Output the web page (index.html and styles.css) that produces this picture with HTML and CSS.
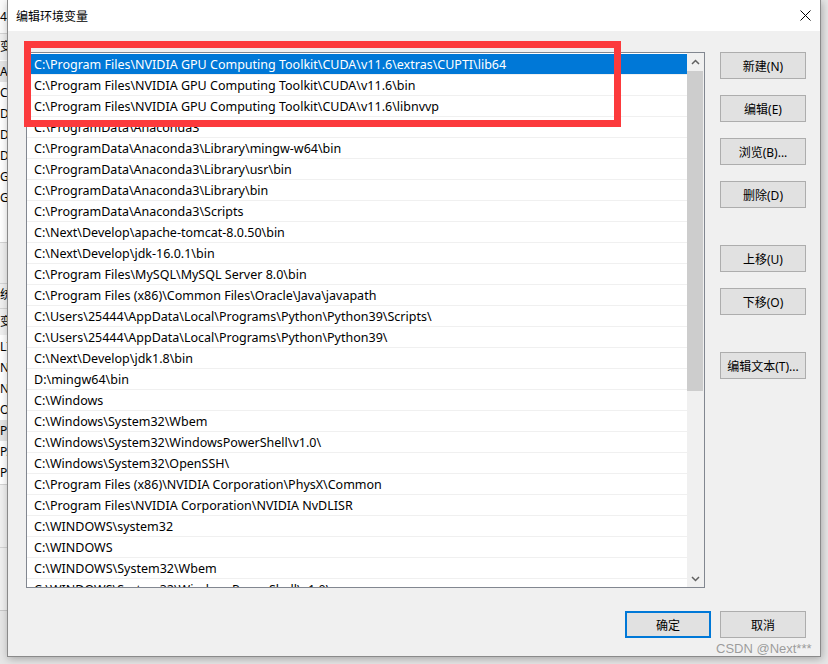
FILE: index.html
```html
<!DOCTYPE html>
<html lang="zh-CN">
<head>
    <meta charset="UTF-8">
    <meta name="viewport" content="width=device-width, initial-scale=1.0">
    <title>编辑环境变量</title>
    <link rel="stylesheet" href="styles.css">
</head>
<body>
    <!-- window behind the dialog, only a sliver is visible -->
    <div class="bg-window">
        <div class="bgw-head">44</div>
        <div class="bgw-label">变量</div>
        <div class="bgw-list">
            <div class="bgw-row hl">AP</div>
            <div class="bgw-row">CL</div>
            <div class="bgw-row">DA</div>
            <div class="bgw-row">DA</div>
            <div class="bgw-row">DE</div>
            <div class="bgw-row">GA</div>
            <div class="bgw-row">GO</div>
        </div>
        <div class="bgw-gap"></div>
        <div class="bgw-label short">统</div>
        <div class="bgw-label">变量</div>
        <div class="bgw-list second">
            <div class="bgw-row">LI</div>
            <div class="bgw-row">NU</div>
            <div class="bgw-row">NV</div>
            <div class="bgw-row">OS</div>
            <div class="bgw-row hl">Pa</div>
            <div class="bgw-row">PA</div>
            <div class="bgw-row">PR</div>
        </div>
        <div class="bgw-gap tall"></div>
    </div>

    <div class="dialog">
        <div class="titlebar">
            <span class="title">编辑环境变量</span>
            <svg class="close" width="11" height="11" viewBox="0 0 11 11">
                <path d="M0.5 0.5L10.5 10.5M10.5 0.5L0.5 10.5" stroke="#000" stroke-width="1" fill="none"/>
            </svg>
        </div>

        <div class="dialog-body">
            <div class="listbox">
                <div class="rows">
                    <div class="row selected">C:\Program Files\NVIDIA GPU Computing Toolkit\CUDA\v11.6\extras\CUPTI\lib64</div>
                    <div class="row">C:\Program Files\NVIDIA GPU Computing Toolkit\CUDA\v11.6\bin</div>
                    <div class="row">C:\Program Files\NVIDIA GPU Computing Toolkit\CUDA\v11.6\libnvvp</div>
                    <div class="row">C:\ProgramData\Anaconda3</div>
                    <div class="row">C:\ProgramData\Anaconda3\Library\mingw-w64\bin</div>
                    <div class="row">C:\ProgramData\Anaconda3\Library\usr\bin</div>
                    <div class="row">C:\ProgramData\Anaconda3\Library\bin</div>
                    <div class="row">C:\ProgramData\Anaconda3\Scripts</div>
                    <div class="row">C:\Next\Develop\apache-tomcat-8.0.50\bin</div>
                    <div class="row">C:\Next\Develop\jdk-16.0.1\bin</div>
                    <div class="row">C:\Program Files\MySQL\MySQL Server 8.0\bin</div>
                    <div class="row">C:\Program Files (x86)\Common Files\Oracle\Java\javapath</div>
                    <div class="row">C:\Users\25444\AppData\Local\Programs\Python\Python39\Scripts\</div>
                    <div class="row">C:\Users\25444\AppData\Local\Programs\Python\Python39\</div>
                    <div class="row">C:\Next\Develop\jdk1.8\bin</div>
                    <div class="row">D:\mingw64\bin</div>
                    <div class="row">C:\Windows</div>
                    <div class="row">C:\Windows\System32\Wbem</div>
                    <div class="row">C:\Windows\System32\WindowsPowerShell\v1.0\</div>
                    <div class="row">C:\Windows\System32\OpenSSH\</div>
                    <div class="row">C:\Program Files (x86)\NVIDIA Corporation\PhysX\Common</div>
                    <div class="row">C:\Program Files\NVIDIA Corporation\NVIDIA NvDLISR</div>
                    <div class="row">C:\WINDOWS\system32</div>
                    <div class="row">C:\WINDOWS</div>
                    <div class="row">C:\WINDOWS\System32\Wbem</div>
                    <div class="row">C:\WINDOWS\System32\WindowsPowerShell\v1.0\</div>
                </div>
                <div class="scrollbar">
                    <div class="sb-arrow">
                        <svg width="9" height="6" viewBox="0 0 9 6"><polyline points="1,5 4.5,1.5 8,5" fill="none" stroke="#606060" stroke-width="1.5"/></svg>
                    </div>
                    <div class="sb-thumb"></div>
                    <div class="sb-track"></div>
                    <div class="sb-arrow">
                        <svg width="9" height="6" viewBox="0 0 9 6"><polyline points="1,1 4.5,4.5 8,1" fill="none" stroke="#606060" stroke-width="1.5"/></svg>
                    </div>
                </div>
            </div>

            <div class="side-buttons">
                <div class="btn-group">
                    <div class="btn">新建(N)</div>
                    <div class="btn">编辑(E)</div>
                    <div class="btn">浏览(B)...</div>
                    <div class="btn">删除(D)</div>
                </div>
                <div class="btn-group">
                    <div class="btn">上移(U)</div>
                    <div class="btn">下移(O)</div>
                </div>
                <div class="btn-group">
                    <div class="btn">编辑文本(T)...</div>
                </div>
            </div>

            <div class="footer">
                <div class="btn default">确定</div>
                <div class="btn">取消</div>
            </div>
        </div>
    </div>

    <!-- red annotation drawn over the screenshot -->
    <div class="mark"></div>
    <div class="watermark">CSDN @Next***</div>
</body>
</html>
```

FILE: styles.css
```css
body {
    margin: 0;
    width: 828px;
    height: 664px;
    overflow: hidden;
    position: relative;
    background: #e6e6e6;
    font-family: "Noto Sans", "Noto Sans CJK SC", sans-serif;
    font-size: 12px;
    color: #000;
}

/* background window sliver */
.bg-window {
    position: absolute;
    left: 0;
    top: 0;
    width: 7px;
    height: 610px;
    overflow: hidden;
    background: #f0f0f0;
    border-bottom: 1px solid #c8c8c8;
}
.bgw-head {
    height: 33px;
    line-height: 33px;
    border-bottom: 1px solid #d4d4d4;
    background: #fafafa;
    white-space: nowrap;
}
.bgw-label {
    height: 26px;
    line-height: 26px;
    white-space: nowrap;
}
.bgw-label.short {
    height: 24px;
    line-height: 22px;
    border-bottom: 1px solid #d4d4d4;
}
.bgw-list {
    height: 183px;
    padding-top: 1px;
    box-sizing: border-box;
    background: #fff;
    border-bottom: 1px solid #d4d4d4;
}
.bgw-list.second {
    height: 150px;
}
.bgw-row {
    height: 21px;
    line-height: 21px;
    white-space: nowrap;
}
.bgw-row.hl {
    background: #e5e5e5;
}
.bgw-gap {
    height: 40px;
    border-bottom: 1px solid #d4d4d4;
}
.bgw-gap.tall {
    height: 62px;
}

/* dialog */
.dialog {
    position: absolute;
    left: 7px;
    top: 0;
    width: 814px;
    height: 657px;
    box-sizing: border-box;
    border: 1px solid #8a8a8a;
    border-top: none;
    background: #f0f0f0;
    box-shadow: 1px 2px 8px rgba(0, 0, 0, 0.28);
    display: flex;
    flex-direction: column;
}
.titlebar {
    height: 31px;
    flex-shrink: 0;
    background: #fff;
    display: flex;
    align-items: center;
    justify-content: space-between;
    padding: 0 9px 0 8px;
}
.title {
    font-family: "Noto Sans CJK SC", sans-serif;
    font-size: 12px;
}
.dialog-body {
    flex: 1;
    display: grid;
    grid-template-columns: 679px 86px;
    grid-template-rows: 536px 27px;
    column-gap: 15px;
    row-gap: 23px;
    padding: 21px 14px 18px 18px;
}

/* list */
.listbox {
    display: flex;
    box-sizing: border-box;
    border: 1px solid #828790;
    background: #fff;
    overflow: hidden;
}
.rows {
    flex: 1;
    padding-top: 1px;
    overflow: hidden;
}
.row {
    height: 20px;
    line-height: 21px;
    padding-left: 7px;
    font-size: 12.5px;
    border-bottom: 1px solid #f0f0f0;
    white-space: nowrap;
    overflow: hidden;
}
.row.selected {
    background: #0078d7;
    color: #fff;
}
.scrollbar {
    width: 17px;
    flex-shrink: 0;
    background: #f0f0f0;
    display: flex;
    flex-direction: column;
}
.sb-arrow {
    height: 17px;
    display: flex;
    align-items: center;
    justify-content: center;
}
.sb-thumb {
    height: 320px;
    margin: 1px 1px 0 0;
    background: #cdcdcd;
}
.sb-track {
    flex: 1;
}

/* buttons */
.side-buttons {
    display: flex;
    flex-direction: column;
    gap: 37px;
}
.btn-group {
    display: flex;
    flex-direction: column;
    gap: 16px;
}
.btn {
    width: 86px;
    height: 27px;
    box-sizing: border-box;
    border: 1px solid #adadad;
    background: #e1e1e1;
    display: flex;
    align-items: center;
    justify-content: center;
    white-space: nowrap;
}
.btn.default {
    border: 2px solid #0078d7;
}
.footer {
    grid-column: 1 / 3;
    display: flex;
    justify-content: flex-end;
    gap: 9px;
}

/* overlays */
.mark {
    position: absolute;
    left: 24px;
    top: 41px;
    width: 597px;
    height: 86px;
    box-sizing: border-box;
    border: 7px solid #fc3a3c;
}
.watermark {
    position: absolute;
    left: 716px;
    top: 641px;
    font-family: "Liberation Sans", sans-serif;
    font-size: 13px;
    color: rgba(140, 140, 140, 0.85);
    white-space: nowrap;
}
```
